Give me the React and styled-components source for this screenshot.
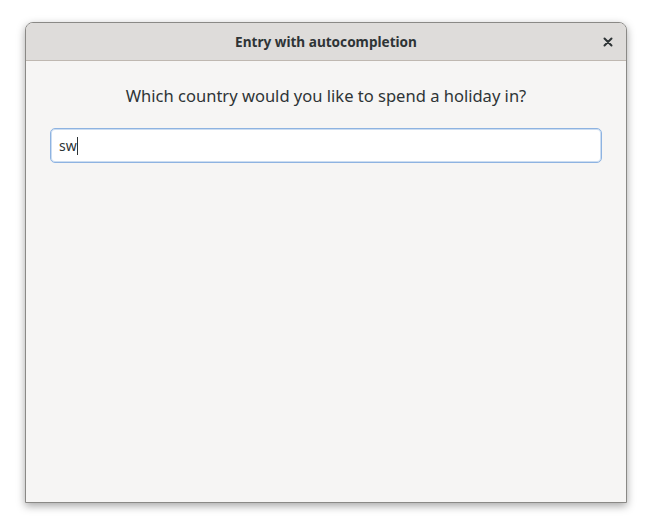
import React from 'react';
import styled, { createGlobalStyle } from 'styled-components';

const GlobalStyle = createGlobalStyle`
    body {
        margin: 0;
        background: #ffffff;
        font-family: 'Noto Sans', 'Open Sans', sans-serif;
    }
`;

const Page = styled.div`
    padding: 22px 25px 29px 25px;
`;

const Window = styled.div`
    width: 602px;
    height: 481px;
    box-sizing: border-box;
    display: flex;
    flex-direction: column;
    background: #f6f5f4;
    border: 1px solid #8a8986;
    border-radius: 8px 8px 0 0;
    box-shadow: 0 3px 9px rgba(0, 0, 0, 0.35);
    overflow: hidden;
`;

const HeaderBar = styled.div`
    height: 37px;
    flex: none;
    display: flex;
    align-items: center;
    justify-content: center;
    position: relative;
    background: #dedcda;
    border-bottom: 1px solid #bfb8b1;
`;

const Title = styled.div`
    font-size: 13.6px;
    font-weight: 700;
    color: #2e3436;
`;

const CloseButton = styled.button`
    position: absolute;
    right: 8px;
    top: 9px;
    width: 20px;
    height: 20px;
    padding: 0;
    border: none;
    background: transparent;
    display: flex;
    align-items: center;
    justify-content: center;
    color: #2e3436;
`;

const Content = styled.div`
    flex: 1;
    display: flex;
    flex-direction: column;
    padding: 21px 24px 0 24px;
    gap: 18px;
`;

const Prompt = styled.div`
    text-align: center;
    font-size: 16.55px;
    color: #2e3436;
    line-height: 28px;
`;

const Entry = styled.div`
    height: 35px;
    box-sizing: border-box;
    background: #ffffff;
    border: 1px solid #8eb3e1;
    border-radius: 5px;
    box-shadow: inset 0 0 0 1px rgba(142, 179, 225, 0.45);
    display: flex;
    align-items: center;
    padding: 0 8px;
    font-size: 14px;
    color: #2e3436;
`;

const Caret = styled.span`
    display: inline-block;
    width: 1px;
    height: 18px;
    background: #2e3436;
`;

export default function App() {
    return (
        <Page>
            <GlobalStyle />
            <Window>
                <HeaderBar>
                    <Title>Entry with autocompletion</Title>
                    <CloseButton aria-label="Close">
                        <svg width="10" height="10" viewBox="0 0 10 10">
                            <path d="M1.5 1.5 L8.5 8.5 M8.5 1.5 L1.5 8.5" stroke="#2e3436" strokeWidth="2" strokeLinecap="round" />
                        </svg>
                    </CloseButton>
                </HeaderBar>
                <Content>
                    <Prompt>Which country would you like to spend a holiday in?</Prompt>
                    <Entry>
                        <span>sw</span>
                        <Caret />
                    </Entry>
                </Content>
            </Window>
        </Page>
    );
}
